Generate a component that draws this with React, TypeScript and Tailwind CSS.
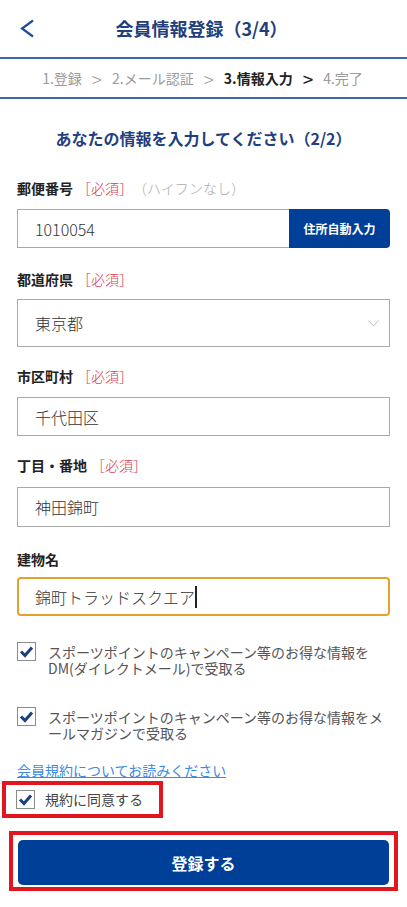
const Check = () => (
  <svg width="19" height="19" viewBox="0 0 19 19" className="shrink-0">
    <rect x="0.5" y="0.5" width="18" height="18" fill="#fff" stroke="#8c8c8c" />
    <path d="M4 9.5 L8 13.5 L15 5.5" fill="none" stroke="#1c3f7e" strokeWidth="3" strokeLinejoin="miter" />
  </svg>
)

const Label = ({ text, required, note }: { text: string; required?: boolean; note?: string }) => (
  <div className="h-[20px] leading-[20px] text-[14px] flex items-center">
    <span className="font-bold text-[#222]">{text}</span>
    {required && <span className="ml-[4px] text-[#d8404c] font-light">［必須］</span>}
    {note && <span className="text-[#aaa] font-light">（{note}）</span>}
  </div>
)

const Field = ({ value, h = 'h-[39px]' }: { value: string; h?: string }) => (
  <div className={`${h} border border-[#aaa] flex items-center pl-[17px] text-[16px] text-[#333] font-light`}>{value}</div>
)

export default function App() {
  return (
    <div className="w-[407px] min-h-[907px] bg-white" style={{ fontFamily: '"Noto Sans CJK JP", "Noto Sans", sans-serif' }}>
      <header className="h-[57px] relative flex items-center justify-center">
        <svg width="16" height="19" viewBox="0 0 16 19" className="absolute left-[19px] top-[19px]">
          <path d="M14 1.5 L3 9.5 L14 17.5" fill="none" stroke="#1f4c9a" strokeWidth="2.2" />
        </svg>
        <h1 className="text-[18px] font-bold text-[#223f7c] ml-[-4px]">会員情報登録（3/4）</h1>
      </header>

      <nav className="h-[42px] border-y-2 border-[#3f66a8] flex items-center justify-center text-[14px] text-[#9a9a9a] gap-[10px] pr-[2px]">
        <span>1.登録</span>
        <span className="text-[19px] font-light leading-none">&gt;</span>
        <span>2.メール認証</span>
        <span className="text-[19px] font-light leading-none">&gt;</span>
        <span className="font-bold text-[#222]">3.情報入力</span>
        <span className="text-[19px] text-[#222] leading-none">&gt;</span>
        <span>4.完了</span>
      </nav>

      <main className="px-[17px]">
        <h2 className="mt-[27px] h-[24px] leading-[24px] text-center text-[16px] font-bold text-[#1f3f7e]">
          あなたの情報を入力してください（2/2）
        </h2>

        <div className="mt-[28px]">
          <Label text="郵便番号" required note="ハイフンなし" />
        </div>
        <div className="mt-[11px] flex h-[39px]">
          <div className="flex-1 border border-[#aaa] border-r-0 flex items-center pl-[17px] text-[16px] text-[#333] font-light">1010054</div>
          <button className="w-[101px] bg-[#003f98] rounded-r-[4px] text-white text-[12px] font-bold">住所自動入力</button>
        </div>

        <div className="mt-[21px]">
          <Label text="都道府県" required />
        </div>
        <div className="mt-[10px] h-[48px] border border-[#aaa] flex items-center justify-between pl-[17px] pr-[10px] text-[16px] text-[#333] font-light">
          <span>東京都</span>
          <svg width="11" height="7" viewBox="0 0 11 7">
            <path d="M0.5 0.5 L5.5 6 L10.5 0.5" fill="none" stroke="#bbb" strokeWidth="1" />
          </svg>
        </div>

        <div className="mt-[19px]">
          <Label text="市区町村" required />
        </div>
        <div className="mt-[11px]">
          <Field value="千代田区" />
        </div>

        <div className="mt-[19px]">
          <Label text="丁目・番地" required />
        </div>
        <div className="mt-[12px]">
          <Field value="神田錦町" h="h-[40px]" />
        </div>

        <div className="mt-[22px]">
          <Label text="建物名" />
        </div>
        <div className="mt-[8px] h-[39px] border-2 border-[#e3a22e] rounded-[4px] flex items-center pl-[16px] text-[16px] text-[#333] font-light">
          錦町トラッドスクエア<span className="inline-block w-[1.5px] h-[22px] bg-[#222]" />
        </div>

        <div className="mt-[26px] flex gap-[12px] text-[14px] leading-[16px] text-[#555]">
          <Check />
          <p className="pt-[2px]">スポーツポイントのキャンペーン等のお得な情報をDM(ダイレクトメール)で受取る</p>
        </div>

        <div className="mt-[31px] flex gap-[12px] text-[14px] leading-[16px] text-[#555]">
          <Check />
          <p className="pt-[2px]">スポーツポイントのキャンペーン等のお得な情報をメールマガジンで受取る</p>
        </div>

        <a className="mt-[19px] block h-[20px] leading-[20px] text-[14px] text-[#3d8be0] underline">会員規約についてお読みください</a>
      </main>

      <div className="mt-[1px] ml-[2px] w-[161px] h-[37px] border-4 border-[#e2161f] flex items-center pl-[10px] gap-[10px] text-[14px] text-[#444]">
        <Check />
        <span>規約に同意する</span>
      </div>

      <div className="mt-[13px] mx-[9px] h-[60px] border-4 border-[#e2161f] px-[5px] pt-[5px]">
        <button className="w-full h-[45px] bg-[#003f98] rounded-[5px] text-white text-[16px] font-bold">登録する</button>
      </div>
    </div>
  )
}
